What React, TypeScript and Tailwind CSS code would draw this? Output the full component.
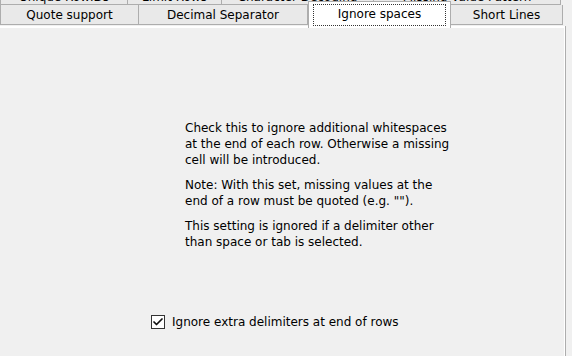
import { Check } from 'lucide-react';

type Tab = { label: string; w: string };

const topRow: Tab[] = [
    { label: 'Unique RowIDs', w: 'w-[128px]' },
    { label: 'Limit Rows', w: 'w-[94px]' },
    { label: 'Character Decoding', w: 'w-[152px]' },
    { label: 'Missing Value Pattern', w: 'w-[187px]' },
];

const App = () => {
    return (
        <div
            className="w-[572px] h-[356px] bg-[#f0f0f0] overflow-hidden flex flex-col text-[12px] text-black"
            style={{ fontFamily: '"DejaVu Sans", Tahoma, sans-serif' }}
        >
            {/* back row of tabs, mostly scrolled off the top */}
            <div className="flex h-[18px] -mt-[13px] shrink-0">
                {topRow.map((t) => (
                    <div
                        key={t.label}
                        className={`${t.w} h-full flex items-end justify-center pb-[1px] bg-[#e9e9e9] border border-[#adadad] border-l-0 first:border-l leading-none`}
                    >
                        {t.label}
                    </div>
                ))}
            </div>

            {/* front row of tabs */}
            <div className="flex h-[20px] shrink-0 relative z-10">
                <div className="w-[139px] h-full flex items-center justify-center pt-[1px] bg-[#e9e9e9] border border-t-0 border-[#adadad]">
                    Quote support
                </div>
                <div className="w-[169px] h-full flex items-center justify-center pt-[1px] bg-[#e9e9e9] border border-t-0 border-l-0 border-[#adadad]">
                    Decimal Separator
                </div>
                <div className="w-[143px] h-[27px] -mt-[4px] px-[4px] py-[2px] bg-white border border-b-0 border-[#adadad]">
                    <div className="h-full border border-dotted border-[#333] flex items-center justify-center pb-[3px]">
                        Ignore spaces
                    </div>
                </div>
                <div className="w-[112px] h-full flex items-center justify-center pt-[1px] bg-[#e9e9e9] border border-t-0 border-l-0 border-[#adadad]">
                    Short Lines
                </div>
            </div>

            {/* tab panel */}
            <div className="w-[565px] flex-1 mt-[1px] bg-[#f0f0f0] border-t-2 border-r border-white shadow-[1px_0_0_#adadad] flex flex-col">
                <div className="pl-[185px] pt-[92px] leading-[16px] flex flex-col gap-[9px]">
                    <p>
                        Check this to ignore additional whitespaces
                        <br />
                        at the end of each row. Otherwise a missing
                        <br />
                        cell will be introduced.
                    </p>
                    <p>
                        Note: With this set, missing values at the
                        <br />
                        end of a row must be quoted (e.g. "").
                    </p>
                    <p>
                        This setting is ignored if a delimiter other
                        <br />
                        than space or tab is selected.
                    </p>
                </div>

                <label className="flex items-center gap-[7px] pl-[151px] mt-[63px]">
                    <span className="w-[14px] h-[14px] bg-white border border-[#333] flex items-center justify-center">
                        <Check size={12} strokeWidth={3.5} className="text-[#111]" />
                    </span>
                    <span>Ignore extra delimiters at end of rows</span>
                </label>
            </div>
        </div>
    );
};

export default App;
